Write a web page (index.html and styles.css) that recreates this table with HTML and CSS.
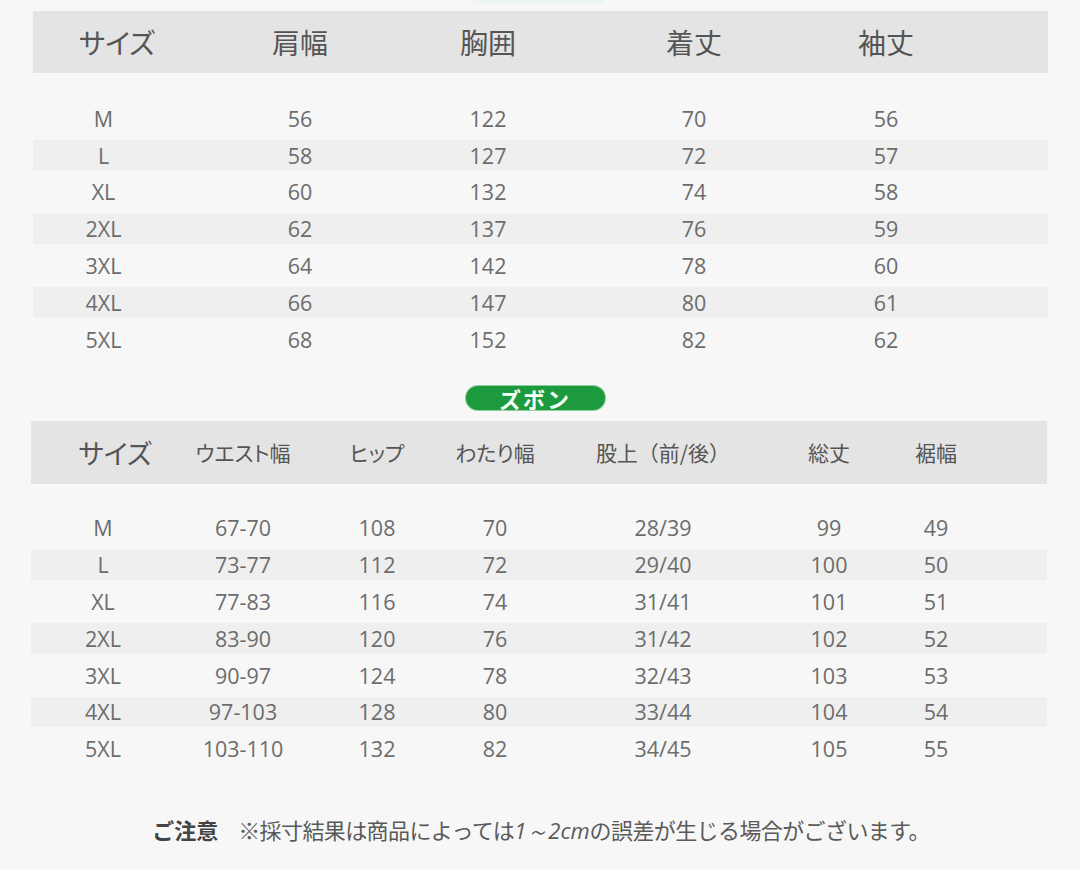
FILE: index.html
```html
<!DOCTYPE html>
<html lang="ja">
<head>
<meta charset="utf-8">
<link rel="stylesheet" href="styles.css">
</head>
<body>
<div class="page">
  <div class="ghost-badge"></div>

  <section class="table tops">
    <div class="head">
      <div class="hc first">サイズ</div>
      <div class="hc">肩幅</div>
      <div class="hc">胸囲</div>
      <div class="hc">着丈</div>
      <div class="hc">袖丈</div>
    </div>
    <div class="rows">
      <div class="row"><span class="sz">M</span><span>56</span><span>122</span><span>70</span><span>56</span></div>
      <div class="row alt"><span class="sz">L</span><span>58</span><span>127</span><span>72</span><span>57</span></div>
      <div class="row"><span class="sz">XL</span><span>60</span><span>132</span><span>74</span><span>58</span></div>
      <div class="row alt"><span class="sz">2XL</span><span>62</span><span>137</span><span>76</span><span>59</span></div>
      <div class="row"><span class="sz">3XL</span><span>64</span><span>142</span><span>78</span><span>60</span></div>
      <div class="row alt"><span class="sz">4XL</span><span>66</span><span>147</span><span>80</span><span>61</span></div>
      <div class="row"><span class="sz">5XL</span><span>68</span><span>152</span><span>82</span><span>62</span></div>
    </div>
  </section>

  <div class="badge-wrap"><div class="badge">ズボン</div></div>

  <section class="table pants">
    <div class="head">
      <div class="hc first big">サイズ</div>
      <div class="hc">ウエスト幅</div>
      <div class="hc">ヒップ</div>
      <div class="hc">わたり幅</div>
      <div class="hc wide">股上（前/後）</div>
      <div class="hc">総丈</div>
      <div class="hc">裾幅</div>
    </div>
    <div class="rows">
      <div class="row"><span class="sz">M</span><span>67-70</span><span>108</span><span>70</span><span>28/39</span><span>99</span><span>49</span></div>
      <div class="row alt"><span class="sz">L</span><span>73-77</span><span>112</span><span>72</span><span>29/40</span><span>100</span><span>50</span></div>
      <div class="row"><span class="sz">XL</span><span>77-83</span><span>116</span><span>74</span><span>31/41</span><span>101</span><span>51</span></div>
      <div class="row alt"><span class="sz">2XL</span><span>83-90</span><span>120</span><span>76</span><span>31/42</span><span>102</span><span>52</span></div>
      <div class="row"><span class="sz">3XL</span><span>90-97</span><span>124</span><span>78</span><span>32/43</span><span>103</span><span>53</span></div>
      <div class="row alt"><span class="sz">4XL</span><span>97-103</span><span>128</span><span>80</span><span>33/44</span><span>104</span><span>54</span></div>
      <div class="row"><span class="sz">5XL</span><span>103-110</span><span>132</span><span>82</span><span>34/45</span><span>105</span><span>55</span></div>
    </div>
  </section>

  <p class="note"><b class="note-title">ご注意</b><span class="note-text">※採寸結果は商品によっては<i>1～2cm</i>の誤差が生じる場合がございます。</span></p>
</div>
</body>
</html>
```

FILE: styles.css
```css
html, body {
  margin: 0;
  padding: 0;
  background: #f7f7f7;
}

.page {
  width: 1080px;
  height: 869px;
  overflow: hidden;
  font-family: "Open Sans", "Noto Sans CJK JP", sans-serif;
  color: #666;
}

.ghost-badge {
  width: 132px;
  height: 4px;
  margin: 0 0 7px 472px;
  background: #ecf4f4;
  border-radius: 0 0 10px 10px;
}

.table .head {
  display: grid;
  align-items: center;
  background: #e4e4e4;
  font-family: "Noto Sans CJK JP", sans-serif;
  font-feature-settings: "palt";
  color: #555;
  text-align: center;
}

.table .rows .row {
  display: grid;
  align-items: center;
  height: 36.8px;
  text-align: center;
  font-size: 21.5px;
  color: #6c6c6c;
}

.table .rows .row.alt {
  background: linear-gradient(transparent 3px, #efefef 3px, #efefef calc(100% - 3px), transparent calc(100% - 3px));
}

/* Tops table */
.tops {
  margin-left: 33px;
  width: 1015px;
}

.tops .head,
.tops .row {
  grid-template-columns: 168px 198px 178px 234px 150px 1fr;
}

.tops .head {
  height: 62px;
  font-size: 28px;
}

.tops .rows {
  margin-top: 27px;
}

.tops .row .sz {
  padding-right: 27px;
}

/* Badge */
.badge-wrap {
  display: flex;
  justify-content: center;
  padding: 28px 0 11px;
  margin-left: -10px;
}

.badge {
  width: 139px;
  height: 24px;
  border-radius: 13px;
  background: #1e9a3e;
  box-shadow: 0 0 0 1px #8fcf9c;
  color: #f4fff6;
  font-family: "Noto Sans CJK JP", sans-serif;
  font-weight: 700;
  font-size: 22px;
  line-height: 24px;
  text-align: center;
  letter-spacing: 2px;
}

/* Pants table */
.pants {
  margin-left: 31px;
  width: 1016px;
}

.pants .head,
.pants .row {
  grid-template-columns: 144px 136px 132px 104px 232px 100px 114px 1fr;
}

.pants .head {
  height: 63px;
  font-size: 21px;
}

.pants .head .big {
  font-size: 27px;
  padding-left: 24px;
}

.pants .head .wide {
  font-feature-settings: normal;
}

.pants .rows {
  margin-top: 26px;
}

/* Note */
.note {
  margin: 46px 0 0;
  text-align: center;
  font-family: "Noto Sans CJK JP", sans-serif;
  font-size: 22px;
  color: #5a5a5a;
  padding-left: 2px;
}

.note-title {
  font-weight: 700;
  color: #444;
  margin-right: 20px;
}

.note-text {
  letter-spacing: -0.6px;
}

.note-text i {
  font-family: "Open Sans", sans-serif;
  font-style: italic;
  letter-spacing: 0;
}
```
